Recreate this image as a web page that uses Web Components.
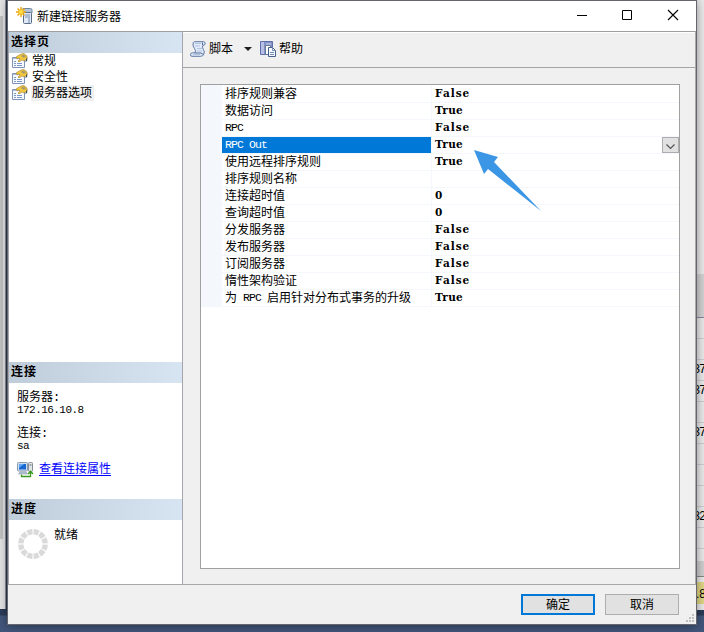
<!DOCTYPE html>
<html lang="zh-CN"><head><meta charset="utf-8"><title>新建链接服务器</title>
<style>
html,body{margin:0;width:704px;height:632px;overflow:hidden;background:#3f5274}
body{font:12px/16px "Liberation Mono","Noto Sans CJK SC",monospace;color:#000;position:relative}
</style></head><body>
<linked-server-app></linked-server-app>
<script>
const define=(name,html)=>customElements.define(name,class extends HTMLElement{
  constructor(){super();const t=document.createElement('template');t.innerHTML=html;
    this.attachShadow({mode:'open'}).append(t.content.cloneNode(true));}
});

/* Strips of the parent window that show around the dialog */
define('desktop-backdrop',`<style>
:host{display:flex;justify-content:space-between;width:704px;height:632px;background:linear-gradient(#293a56 0 610px,#2b3b58 610px 615px,#42567b 616px)}
.l{width:5px;height:609px;background:linear-gradient(90deg,#0000 3px,#e6e6e6 3px 5px),linear-gradient(#e4e4e4 0 16px,#c2c2c2 16px 539px,#e4e4e4 539px);border-right:1px solid #8e939c}
.r{width:14px;height:610px;background:#e9e9e9;display:flex;flex-direction:column}
.top{height:274px}.hd{height:43px;background:#d2d2d2;border-bottom:1px solid #85869a}
.row{height:20px;border-bottom:1px solid #cdcdd3;font-size:12px;letter-spacing:-1.200px;line-height:21px;padding-left:3px}
.gap{height:12px}.bar{height:15px;background:#cfcfcf;border-bottom:1px solid #888;margin-bottom:5px}
.tip{height:22px;background:#e0d686;font:12px/24px "Liberation Sans",sans-serif;padding-left:6px}
</style><div class="l"></div><div class="r"><div class="top"></div><div class="hd"></div>
<div class="row"></div><div class="row"></div><div class="row">37</div><div class="row">37</div><div class="row"></div><div class="row">37</div><div class="row"></div><div class="row"></div><div class="row"></div><div class="row">32</div><div class="row"></div>
<div class="gap"></div><div class="bar"></div><div class="tip">.8</div></div>`);

define('server-icon',`<style>:host{display:block;width:18px;height:18px}svg{display:block}</style>
<svg width="18" height="18" viewBox="0 0 18 18"><path d="M6.500 1.500h8q1.500 0 1.500 1.500v3h-8" fill="#b4c5da" stroke="#72849c"/><rect x="7.500" y="5.500" width="8" height="11" rx="1" fill="#dfe8f4" stroke="#5b6d86"/><path d="M9 8h5M9 10h3" stroke="#7b94b6"/><path d="M13 7v9" stroke="#a7bbd4" stroke-width="2"/><path d="M5 0v10M0 5h10M1.500 1.500l7 7M8.500 1.500l-7 7" stroke="#e9a40d" stroke-width="1.400"/><circle cx="5" cy="5" r="2.400" fill="#ffe14c" stroke="#f3b51d"/></svg>`);

define('page-icon',`<style>:host{display:block;width:16px;height:16px}svg{display:block}</style>
<svg width="16" height="16" viewBox="0 0 16 16"><path d="M.5 4.500h12v10H.5z" fill="#f8faff" stroke="#7d93b8"/><path d="M1 5.500h7" stroke="#a9bcd9"/><path d="M2 8.500h2M2 10.500h2M2 12.500h2M5 10.500h5M5 12.500h5" stroke="#7d97c9"/><path d="M4 4l5-3 3-.5 3 2.500v3l-3 2-2-1-3 2-1-1 2-2-1-1-2 1z" fill="#f0c844" stroke="#a5812c" stroke-width=".6"/><path d="M11 1.500l3 1.500-2 2-3-2z" fill="#a89a62"/><path d="M15.200 4v4l-2 1z" fill="#384352"/></svg>`);

define('script-icon',`<style>:host{display:block;width:16px;height:16px}svg{display:block}</style>
<svg width="16" height="16" viewBox="0 0 16 16"><path d="M4.500 .7h9q1.800 0 1.700 1.800t-2.200 1.800q-1.400 1.700.4 4.200t.3 4.800q-.7 2-3 2H2q-1.700 0-1.500-1.800t2-1.700h2.500Q6.400 10 4.500 7.500T3 3Q3 .9 4.500 .7z" fill="#e1eafa" stroke="#5f78a4"/><path d="M5 2.500h6M5 5h5M7 7.500h5M7 10h5M3 13.500h7" stroke="#b3c3de"/><path d="M12.500 1.500v2.500M5 12h6l2.500 1.500" fill="none" stroke="#536c96"/></svg>`);

define('help-icon',`<style>:host{display:block;width:16px;height:16px}svg{display:block}</style>
<svg width="16" height="16" viewBox="0 0 16 16"><path d="M.5 .5h12v13H.5z" fill="#8391c6" stroke="#5f6fae"/><path d="M1 1h3v12H1z" fill="#b7bfe4"/><path d="M6 2h5v3H6z" fill="#a9b5df"/><path d="M5.500 4.500h5v9h-5z" fill="#fff" stroke="#657a98"/><path d="M8.500 6.500h4l3 3v6h-7z" fill="#f5f8ff" stroke="#48618a"/><path d="M12.500 6.500v3h3M10 11.500h4M10 13.500h4" fill="none" stroke="#7890b5"/></svg>`);

define('connection-icon',`<style>:host{display:block;width:17px;height:16px}svg{display:block}</style>
<svg width="17" height="16" viewBox="0 0 17 16"><rect x=".5" y=".5" width="10" height="8.500" rx="1" fill="#cfdcec" stroke="#8b9bb2"/><rect x="2" y="2" width="7" height="5.500" fill="#1768d3"/><path d="M2 2h5L2 6z" fill="#62a6f4"/><path d="M3 10h6l1.500 2H1.500z" fill="#bbc9da" stroke="#8494a9" stroke-width=".6"/><rect x="11.500" y=".5" width="4" height="9" rx="1" fill="#e2e5e8" stroke="#858d96"/><path d="M12.500 3h2" stroke="#666"/><path d="M4.500 12.500v2h9v-4M11 12l2.500-2.800L16 12" fill="none" stroke="#37991d" stroke-width="1.300"/></svg>`);

define('progress-ring',`<style>:host{display:block;width:30px;height:30px}svg{display:block}</style>
<svg width="30" height="30" viewBox="0 0 30 30"><circle cx="15" cy="15" r="12.200" fill="none" stroke="#dadada" stroke-width="5.400" pathLength="120" stroke-dasharray="8.200 1.800" stroke-dashoffset="-.9"/></svg>`);

define('title-bar',`<style>
:host{display:flex;height:30px;align-items:center;background:#fff;padding-left:8px;border-bottom:1px solid #9f9f9f;font-family:"Noto Sans CJK SC",sans-serif}
span{flex:1;padding-left:3px;line-height:28px}svg{display:block}
</style><server-icon></server-icon><span><slot></slot></span>
<svg width="120" height="30" viewBox="0 0 120 30" fill="none" stroke="#000"><path d="M1 14.500h10"/><path d="M46.500 9.500h9v9h-9z"/><path d="M92 9l10 10M102 9l-10 10" stroke-width="1.100"/></svg>`);

define('section-header',`<style>:host{display:block;height:21px;padding-left:2px;background:linear-gradient(90deg,#bfcddb,#d7e4f2);font:bold 12px/17px "Noto Sans CJK SC",sans-serif;letter-spacing:1px}</style><slot></slot>`);

define('page-item',`<style>:host{display:flex;height:16px;gap:3px;padding-left:3px}
span{padding:0 2px 0 1px;line-height:18px;height:16px}:host([selected]) span{background:#f0f0f0}</style><page-icon></page-icon><span><slot></slot></span>`);

define('side-panel',`<style>
:host{display:flex;flex-direction:column;width:173px;background:#fff;border-left:1px solid #a5a5ab;border-right:1px solid #a5a5ab}
.pages{height:309px}.conn{height:116px;box-sizing:border-box;padding:9px 0 0 8px;line-height:12px}
.conn div{height:12px;white-space:nowrap;font-size:11px;letter-spacing:-.55px}.conn .cjk{font-size:12px;letter-spacing:0}.conn .gap{margin-top:12px}
.conn .link{display:flex;height:16px;margin-top:10px;gap:5px;font-size:12px;letter-spacing:0;line-height:17px}
a{color:#00f;text-decoration:underline;text-underline-offset:2px}
.prog{display:flex;padding:9px 0 0 9px;gap:6px}.prog span{line-height:14px}
</style><section-header>选择页</section-header><div class="pages"><page-item>常规</page-item><page-item>安全性</page-item><page-item selected>服务器选项</page-item></div>
<section-header>连接</section-header><div class="conn"><div class="cjk">服务器:</div><div>172.16.10.8</div><div class="cjk gap">连接:</div><div>sa</div><div class="link"><connection-icon></connection-icon><a>查看连接属性</a></div></div>
<section-header>进度</section-header><div class="prog"><progress-ring></progress-ring><span>就绪</span></div>`);

define('tool-bar',`<style>:host{display:flex;height:36px;align-items:center;padding:0 0 2px 7px;border-bottom:1px solid #a5a5a8;border-top:1px solid #fff;box-sizing:border-box}
span{margin-left:3px;padding-top:1px}i{width:0;height:0;border:4px solid transparent;border-top-color:#202020;border-bottom:0;margin:0 8px 0 11px}</style>
<script-icon></script-icon><span>脚本</span><i></i><help-icon></help-icon><span>帮助</span>`);

define('property-row',`<style>
:host{display:flex;height:17px;line-height:18px;white-space:pre}
.n{width:209px;height:17px;padding-left:3px;box-sizing:border-box;border-bottom:1px solid #f4f7fc}
.n ::slotted(span){font-size:11.500px;letter-spacing:-.9px;vertical-align:1px;line-height:14px}
.v{flex:1;display:flex;height:16px;border-left:1px solid #f4f7fc;border-bottom:1px solid #f4f7fc;padding-left:3px;font:bold 10.500px/14px "DejaVu Serif",serif;letter-spacing:var(--track)}
.b{display:none;margin-left:auto;width:15px;height:14px;border:1px solid #adadad;background:#e1e1e1}
:host([selected]) .n{background:#0078d7;background-clip:padding-box;color:#fff}:host([selected]) .b{display:block}
</style><div class="n"><slot></slot></div><div class="v"><slot name="value"></slot><div class="b"><svg width="15" height="14" style="display:block"><path d="M3.500 6.500l4 4 4-4" fill="none" stroke="#555" stroke-width="1.200"/></svg></div></div>`);

define('property-grid',`<style>:host{display:block;width:478px;height:483px;border:1px solid #a0a0a0;background:linear-gradient(90deg,#f4f7fc 21px,#fff 21px) 0 0/100% 222px no-repeat #fff}
.rows{padding-left:21px;padding-top:1px}</style><div class="rows"></div>`);
const rows=[['排序规则兼容','False'],['数据访问','True'],['<span>RPC</span>','False'],['<span>RPC Out</span>','True',1],['使用远程排序规则','True'],['排序规则名称',''],['连接超时值','0'],['查询超时值','0'],['分发服务器','False'],['发布服务器','False'],['订阅服务器','False'],['惰性架构验证','False'],['为<span> RPC </span>启用针对分布式事务的升级','True']];
customElements.define('server-options',class extends HTMLElement{connectedCallback(){
  const r=this.attachShadow({mode:'open'});
  r.innerHTML='<style>:host{display:block;padding:16px 0 0 17px}</style><property-grid></property-grid>';
  r.querySelector('property-grid').shadowRoot.querySelector('.rows').innerHTML=rows.map(([n,v,s])=>`<property-row${s?' selected':''} style="--track:${v==='True'?'.3px':'1px'}">${n}<span slot="value">${v}</span></property-row>`).join('');
}});

define('dialog-button',`<style>:host{display:block;box-sizing:border-box;width:74px;height:21px;border:1px solid #adadad;background:#e1e1e1;text-align:center;line-height:23px}
:host([primary]){border:2px solid #0078d7;line-height:21px}</style><slot></slot>`);

define('dialog-footer',`<style>:host{display:flex;height:39px;border-top:1px solid #a7a7aa;justify-content:flex-end;gap:10px;padding-right:2px}
dialog-button{margin-top:9px}svg{align-self:flex-end;margin-left:-3px;margin-bottom:2px}</style>
<dialog-button primary>确定</dialog-button><dialog-button>取消</dialog-button><svg width="8" height="8" fill="#bfbfbf"><path d="M6 0h2v2H6zM3 3h2v2H3zM6 3h2v2H6zM0 6h2v2H0zM3 6h2v2H3zM6 6h2v2H6z"/></svg>`);

define('dialog-window',`<style>
:host{display:flex;flex-direction:column;width:688px;height:623px;border:1px solid #65676d;background:#f0f0f0;box-shadow:0 1px 9px #0006}
.mid{display:flex;height:552px}.main{flex:1;border-right:1px solid #aaa}
</style><title-bar>新建链接服务器</title-bar><div class="mid"><side-panel></side-panel><div class="main"><tool-bar></tool-bar><server-options></server-options></div></div><dialog-footer></dialog-footer>`);

define('pointer-arrow',`<style>:host{display:block;width:68px;height:62px}svg{display:block}</style>
<svg width="68" height="62"><path d="M0 0l24 7-4 5 47 49L14 19l-4 5z" fill="#3c96e6"/></svg>`);

define('linked-server-app',`<style>:host{display:block;position:relative;width:704px;height:632px;overflow:hidden}
dialog-window{position:absolute;left:7px;top:0}pointer-arrow{position:absolute;left:474px;top:150px}</style>
<desktop-backdrop></desktop-backdrop><dialog-window></dialog-window><pointer-arrow></pointer-arrow>`);
</script></body></html>
